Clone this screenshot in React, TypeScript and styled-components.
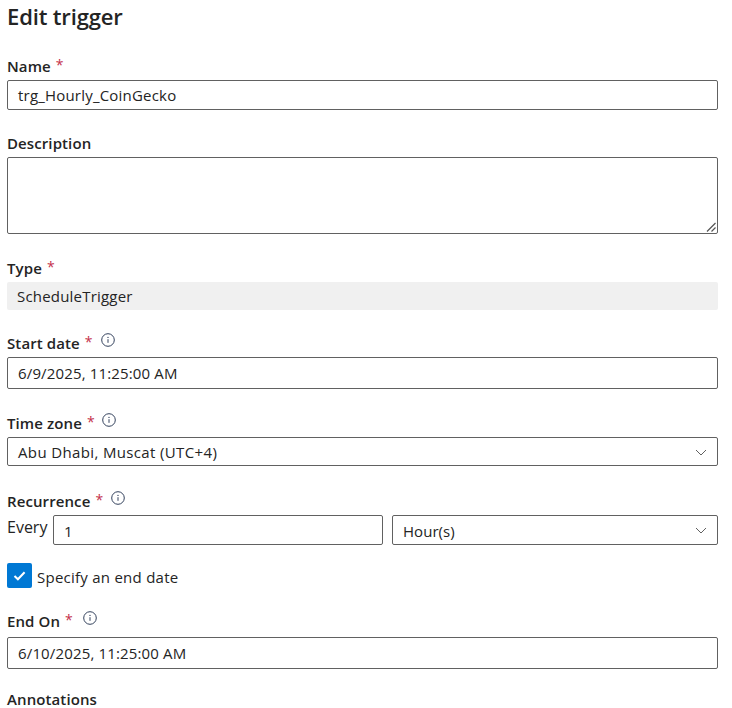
import React from "react";
import styled, { createGlobalStyle } from "styled-components";

const Global = createGlobalStyle`
  html, body { margin: 0; padding: 0; background: #fff; }
  body { font-family: "Open Sans", "Liberation Sans", sans-serif; color: #242424; overflow: hidden; }
`;

const Page = styled.div`
  width: 732px;
  height: 708px;
  padding-left: 7px;
  box-sizing: border-box;
  overflow: hidden;
`;

const Title = styled.h1`
  margin: 0;
  height: 36px;
  font-size: 22px;
  line-height: 32px;
  font-weight: 600;
  letter-spacing: -0.15px;
`;

const Field = styled.div<{ $top: number; $gap?: number }>`
  margin-top: ${(p) => p.$top}px;
  width: 711px;
  display: flex;
  flex-direction: column;
  gap: ${(p) => p.$gap ?? 5}px;
`;

const LabelRow = styled.div`
  display: flex;
  align-items: center;
  height: 18px;
  font-size: 15px;
  line-height: 18px;
  font-weight: 600;
  letter-spacing: 0.1px;
`;

const Star = styled.span`
  color: #c4314b;
  font-weight: 400;
  font-size: 14px;
  margin-left: 5px;
  position: relative;
  top: -1px;
`;

const InfoWrap = styled.span<{ $left: number }>`
  display: inline-flex;
  margin-left: ${(p) => p.$left}px;
  position: relative;
  top: -3px;
`;

const Box = styled.div<{ $h: number; $track?: number }>`
  box-sizing: border-box;
  height: ${(p) => p.$h}px;
  flex: none;
  min-width: 0;
  border: 1px solid #616161;
  border-radius: 2px;
  padding: 0 10px;
  display: flex;
  align-items: center;
  justify-content: space-between;
  font-size: 15px;
  letter-spacing: ${(p) => p.$track ?? 0.2}px;
  background: #fff;
  position: relative;
`;

const SelectBox = styled(Box)`
  padding-top: 1px;
`;

const ReadOnly = styled.div`
  box-sizing: border-box;
  height: 28px;
  background: #f0f0f0;
  border-radius: 2px;
  padding: 0 10px;
  display: flex;
  align-items: center;
  font-size: 15px;
  letter-spacing: 0.2px;
`;

const Grip = styled.svg`
  position: absolute;
  right: 0;
  bottom: 0;
`;

const Row = styled.div`
  display: flex;
  align-items: flex-start;
  gap: 9px;
`;

const Every = styled.span`
  width: 41px;
  margin-right: -4px;
  font-size: 16px;
  line-height: 24px;
  height: 30px;
  flex: none;
`;

const WideSelect = styled(SelectBox)`
  flex: 1;
`;

const NarrowBox = styled(SelectBox)`
  width: 330px;
`;

const CheckRow = styled.div`
  margin-top: 18px;
  height: 25px;
  display: flex;
  align-items: center;
  gap: 5px;
  font-size: 15px;
  letter-spacing: 0.25px;
`;

const CheckText = styled.span`
  position: relative;
  top: 1px;
`;

const Check = styled.span`
  width: 25px;
  height: 25px;
  border-radius: 2px;
  background: #0078d4;
  display: flex;
  align-items: center;
  justify-content: center;
  flex: none;
`;

const Info = () => (
  <svg width="14" height="14" viewBox="0 0 14 14" fill="none">
    <circle cx="7" cy="7" r="6.3" stroke="#33415c" strokeWidth="1" />
    <path d="M7 6.2v3.6" stroke="#33415c" strokeWidth="1" />
    <circle cx="7" cy="4.4" r="0.65" fill="#33415c" />
  </svg>
);

const Chevron = () => (
  <svg width="12" height="7" viewBox="0 0 12 7" fill="none">
    <path d="M1 1l5 5 5-5" stroke="#616161" strokeWidth="1" />
  </svg>
);

const Label = ({ text, star, info }: { text: string; star?: boolean; info?: number }) => (
  <LabelRow>
    {text}
    {star && <Star>*</Star>}
    {info !== undefined && (
      <InfoWrap $left={info}>
        <Info />
      </InfoWrap>
    )}
  </LabelRow>
);

export default function App() {
  return (
    <Page>
      <Global />
      <Title>Edit trigger</Title>
      <Field $top={21}>
        <Label text="Name" star />
        <Box $h={30}>trg_Hourly_CoinGecko</Box>
      </Field>
      <Field $top={24}>
        <Label text="Description" />
        <Box $h={77}>
          <Grip width="12" height="12" viewBox="0 0 12 12" fill="none">
            <path d="M2 10.5L10.5 2M6.5 10.5L10.5 6.5" stroke="#555" strokeWidth="1.2" />
          </Grip>
        </Box>
      </Field>
      <Field $top={25}>
        <Label text="Type" star />
        <ReadOnly>ScheduleTrigger</ReadOnly>
      </Field>
      <Field $top={24}>
        <Label text="Start date" star info={8} />
        <Box $h={32} $track={0.15}>6/9/2025, 11:25:00 AM</Box>
      </Field>
      <Field $top={25}>
        <Label text="Time zone" star info={7} />
        <SelectBox $h={29} $track={0.36}>
          Abu Dhabi, Muscat (UTC+4)
          <Chevron />
        </SelectBox>
      </Field>
      <Field $top={26}>
        <Label text="Recurrence" star info={8} />
        <Row>
          <Every>Every</Every>
          <NarrowBox $h={30}>1</NarrowBox>
          <WideSelect $h={30} $track={0.05}>
            Hour(s)
            <Chevron />
          </WideSelect>
        </Row>
      </Field>
      <CheckRow>
        <Check>
          <svg width="15" height="15" viewBox="0 0 15 15" fill="none">
            <path d="M2.5 8l3.4 3.3L12.6 4.2" stroke="#fff" strokeWidth="2" />
          </svg>
        </Check>
        <CheckText>Specify an end date</CheckText>
      </CheckRow>
      <Field $top={24} $gap={7}>
        <Label text="End On" star info={10} />
        <Box $h={32} $track={0.15}>6/10/2025, 11:25:00 AM</Box>
      </Field>
      <Field $top={21}>
        <Label text="Annotations" />
      </Field>
    </Page>
  );
}
